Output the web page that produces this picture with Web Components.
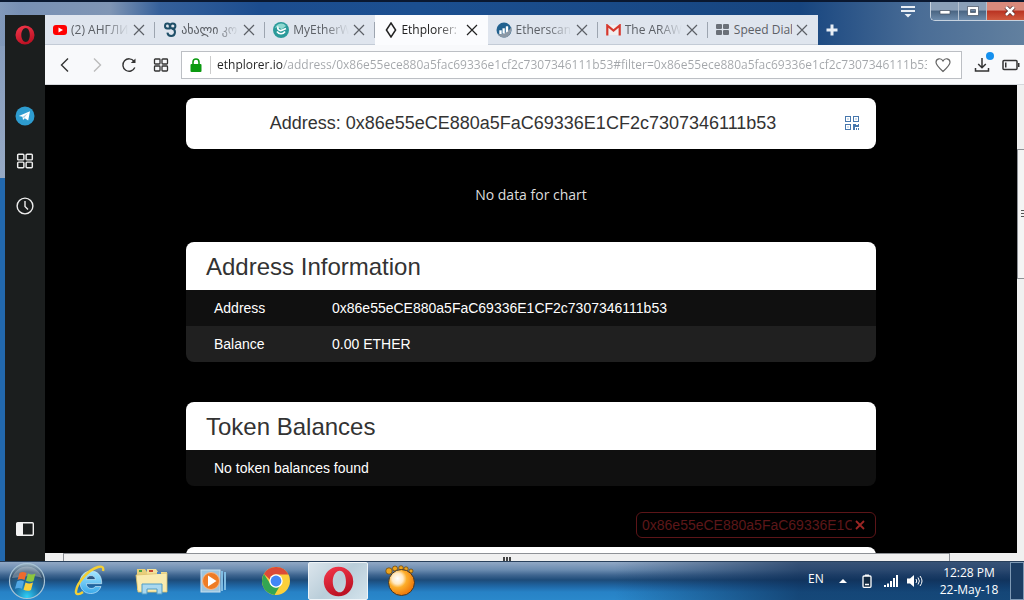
<!DOCTYPE html>
<html lang="en">
<head>
<meta charset="utf-8">
<title>Ethplorer: address</title>
<style>
  html, body { margin: 0; height: 100%; background: #000; }
  body { font-family: "Open Sans", "Noto Sans", sans-serif; overflow: hidden; }
</style>
</head>
<body>
<desktop-screen>
  <browser-window slot="window">
    <side-bar slot="side"></side-bar>
    <browser-tab slot="tabs" icon="youtube" label="(2) АНГЛИ"></browser-tab>
    <browser-tab slot="tabs" icon="loops" label="ახალი კო"></browser-tab>
    <browser-tab slot="tabs" icon="mew" label="MyEtherW"></browser-tab>
    <browser-tab slot="tabs" icon="diamond" label="Ethplorer:" active></browser-tab>
    <browser-tab slot="tabs" icon="etherscan" label="Etherscan"></browser-tab>
    <browser-tab slot="tabs" icon="gmail" label="The ARAW"></browser-tab>
    <browser-tab slot="tabs" icon="dial" label="Speed Dial"></browser-tab>
    <address-bar slot="bar"></address-bar>
    <scroll-view slot="page">
      <address-heading>Address: 0x86e55eCE880a5FaC69336E1CF2c7307346111b53</address-heading>
      <chart-note>No data for chart</chart-note>
      <info-card heading="Address Information" rows='[["Address","0x86e55eCE880a5FaC69336E1CF2c7307346111b53"],["Balance","0.00 ETHER"]]'></info-card>
      <info-card heading="Token Balances" rows='[["No token balances found"]]'></info-card>
      <filter-box value="0x86e55eCE880a5FaC69336E1CF2c7307346111b53"></filter-box>
      <info-card heading="" rows="[]"></info-card>
    </scroll-view>
  </browser-window>
  <task-bar slot="taskbar"></task-bar>
</desktop-screen>

<script>
const ICONS = {
  youtube: ['0 0 14 12', '<rect y="1" width="14" height="10" rx="3" fill="#f00"/><path d="M5.5 3.5v5L10 6z" fill="#fff"/>'],
  loops: ['0 0 14 16', '<g fill="none" stroke="#1f4f68" stroke-width="2"><path d="M6.800 7V3.800a2.400 2.400 0 1 0-2.600 2.600h3.300"/><circle cx="9.800" cy="4" r="2.600"/><path d="M9 6.500a3.800 3.800 0 1 1-4.600 4.200"/></g>'],
  mew: ['0 0 16 16', '<circle cx="8" cy="8" r="8" fill="#2b9a9a"/><path d="M2 6a6.3 6.3 0 0 1 11-2L8.700 7.300 5 5z" fill="#8ed8d0"/><path d="M5 4.500c-1 3 1.500 5 4.500 3.500l3.500-1.500M4 9.500c2 3 6 3 8 0" fill="none" stroke="#fff" stroke-width="1.700"/>'],
  diamond: ['0 0 12 16', '<path d="M6 1l4.600 7L6 15 1.400 8z" fill="none" stroke="#222" stroke-width="1.500"/>'],
  etherscan: ['0 0 16 16', '<circle cx="8" cy="8" r="7.500" fill="#21618f"/><path d="M1.500 12C8 13 13 9 15.500 5c.8 6-3 10.500-7.500 10.500-3 0-5-1.500-6.500-3.500z" fill="#8b98a5"/><path d="M3.500 12V8.500h2V12M6.700 11.500v-5h2v5M10 10.500V4.500h2v5" fill="#fff" stroke="#fff" stroke-width=".4"/>'],
  gmail: ['0 0 15 12', '<path d="M1 1h13v10H1z" fill="#f2eeee"/><path d="M1.300 11.500V1.500l6.200 5 6.200-5v10" fill="none" stroke="#d6382d" stroke-width="2.200"/>'],
  dial: ['0 0 14 12', '<g fill="#6b7078"><rect width="6" height="5" rx="1"/><rect x="7" width="6" height="5" rx="1"/><rect y="6" width="6" height="5" rx="1"/><rect x="7" y="6" width="6" height="5" rx="1"/></g>'],
  close: ['0 0 12 12', '<path d="M1 1l10 10M11 1L1 11" fill="none" stroke="currentColor" stroke-width="1.200"/>'],
  clear: ['0 0 10 10', '<path d="M1 1l8 8M9 1L1 9" fill="none" stroke="currentColor" stroke-width="1.800"/>'],
  back: ['0 0 16 16', '<path d="M11 1.500L4.500 8l6.500 6.500" fill="none" stroke="currentColor" stroke-width="1.400"/>'],
  forward: ['0 0 16 16', '<path d="M5 1.500L11.500 8 5 14.500" fill="none" stroke="currentColor" stroke-width="1.400"/>'],
  reload: ['0 0 16 16', '<path d="M13.800 10.500A6.200 6.200 0 1 1 13 4.200" fill="none" stroke="currentColor" stroke-width="1.400"/><path d="M14.500 1.500v4.600H9.800z" fill="currentColor"/>'],
  grid: ['0 0 16 16', '<g fill="none" stroke="currentColor" stroke-width="1.300"><rect x="1.500" y="2" width="5.500" height="5" rx=".8"/><rect x="9" y="2" width="5.500" height="5" rx=".8"/><rect x="1.500" y="9" width="5.500" height="5" rx=".8"/><rect x="9" y="9" width="5.500" height="5" rx=".8"/></g>'],
  lock: ['0 0 12 14', '<path d="M3 7V4a3 3 0 0 1 6 0v3" fill="none" stroke="#0b9a10" stroke-width="1.600"/><rect x=".5" y="6" width="11" height="8" rx="1" fill="#0b9a10"/>'],
  heart: ['0 0 16 16', '<path d="M8 14.500C3 10 1 8 1 5.300 1 1.300 6.300.500 8 4c1.700-3.500 7-2.700 7 1.300C15 8 13 10 8 14.500z" fill="none" stroke="#666" stroke-width="1.200"/>'],
  download: ['0 0 16 16', '<path d="M8 1v9.500M4.200 7L8 10.800 11.800 7M1.500 11v3h13v-3" fill="none" stroke="#333" stroke-width="1.500"/>'],
  cell: ['0 0 18 12', '<rect x="1" y="1.500" width="14" height="9" rx="1" fill="none" stroke="#333" stroke-width="1.500"/><path d="M16 4h1.500v4H16z" fill="#333"/><path d="M3 3.500h1.500v5H3z" fill="#333"/>'],
  plus: ['0 0 12 12', '<path d="M6 .5v11M.5 6h11" stroke="#e8eef5" stroke-width="3"/>'],
  menu: ['0 0 14 12', '<path d="M0 1h14M0 5h14" stroke="#e8eef5" stroke-width="2"/><path d="M3.500 8h7L7 11.500z" fill="#e8eef5"/>'],
  opera: ['0 0 20 20', '<defs><linearGradient id="p" x2=".4" y2="1"><stop offset="0" stop-color="#f5384c"/><stop offset="1" stop-color="#bd1224"/></linearGradient></defs><path fill-rule="evenodd" d="M10 .5a9.500 9.500 0 1 0 0 19 9.500 9.500 0 0 0 0-19zM10.800 3c2.300 0 4 2.800 4 7s-1.700 7-4 7-4.500-2.800-4.500-7 2.200-7 4.500-7z" fill="url(#p)"/>'],
  telegram: ['0 0 20 20', '<circle cx="10" cy="10" r="9.500" fill="#2e9ccf"/><path d="M3.800 10L15 5.200 13.200 14.500 9.800 12.300 8 14l-.5-3.200z" fill="#fff"/><path d="M7.700 11L13 7l-4 5z" fill="#a9cfe2"/>'],
  clock: ['0 0 18 18', '<circle cx="9" cy="9" r="7.900" fill="none" stroke="#eee" stroke-width="1.400"/><path d="M9 4v5.500l3 3" fill="none" stroke="#eee" stroke-width="1.400"/>'],
  panel: ['0 0 18 14', '<rect x=".7" y=".7" width="16.600" height="12.600" rx="1" fill="none" stroke="#f2f2f2" stroke-width="1.400"/><path d="M1 1h6v12H1z" fill="#f2f2f2"/>'],
  qr: ['0 0 14 14', '<g fill="none" stroke="#4677ad"><rect x=".5" y=".5" width="5" height="5"/><rect x="8.500" y=".5" width="5" height="5"/><rect x=".5" y="8.500" width="5" height="5"/></g><path d="M2.500 2.500h1v1h-1zM10.500 2.500h1v1h-1zM2.500 10.500h1v1h-1zM8 8h3v1h2V8h1v3h-4v3H8zM11 12h1v2h-1zM13 12h1v2h-1z" fill="#4677ad"/>'],
  start: ['0 0 38 38', '<defs><radialGradient id="o" cx=".5" cy=".95" r=".95"><stop offset="0" stop-color="#2fd0f5"/><stop offset=".4" stop-color="#1c70a8"/><stop offset=".75" stop-color="#2c4a68"/><stop offset="1" stop-color="#a5bccb"/></radialGradient></defs><circle cx="19" cy="19" r="17.500" fill="url(#o)" stroke="#a8c4d6" stroke-width="1.200"/><path d="M4 16a15.500 15.500 0 0 1 30 0c-9-4-20-1-30 0z" fill="#fff" opacity=".28"/><path d="M11.500 11c2.500-1.500 4.500-1.200 7 0l-2 7c-2.500-1.300-4.500-1.300-7 0z" fill="#ee6b2d"/><path d="M20 11.500c2.500 1.300 5 1.300 7.500 0l-2 7.500c-2.500 1.300-5 1-7.500-.3z" fill="#8cc63e"/><path d="M9 19.500c2.500-1.500 5-1.200 7 0l-2 7.300c-2.300-1.200-4.500-1.200-7 0z" fill="#52a8e5"/><path d="M17.500 20.500c2.500 1.300 5 1.200 7.500 0L23 28c-2.500 1.300-5 1-7.500-.3z" fill="#fbd03b"/>'],
  ie: ['0 0 32 32', '<defs><linearGradient id="e" x2="0" y2="1"><stop offset="0" stop-color="#a5e6ff"/><stop offset="1" stop-color="#3aa9ea"/></linearGradient></defs><path d="M27 21.500c-1.700 4.500-5.500 7-10.300 7C10.500 28.500 6 24 6 17.500S10.500 6 17 6s11 4.500 10.700 12.700H12.300c.2 3 2.100 4.800 4.900 4.800 2 0 3.300-.7 4-2zM12.400 14.500h9c-.3-2.500-2-4-4.400-4s-4.200 1.500-4.600 4z" fill="url(#e)" stroke="#d8f3ff" stroke-width=".6"/><path d="M9 27c-4 3-7.500 3-7-1C3 18 14 5 24 2c4-1 6 0 5 4" fill="none" stroke="#f3cf35" stroke-width="2.400"/>'],
  folder: ['0 0 34 30', '<path d="M2 3h8l2 3h18v18H2z" fill="#e8cf7c"/><path d="M4 4h3v2H4z" fill="#49a441"/><path d="M12 3h9l2 3h9v18H12z" fill="#f3e19b"/><path d="M1 9l31-2v19H3z" fill="#f9ebb0" stroke="#dcc069" stroke-width=".8"/><path d="M14 4h4v2h-4z" fill="#c9472f"/><path d="M22 6h4v2h-4z" fill="#4c86c8"/><path d="M7 28V18h20v10h-5v-5H12v5z" fill="#a9d8ef" stroke="#4f9cc6"/>'],
  player: ['0 0 28 24', '<path d="M21 2h2v20h-2zM24 3h2v18h-2z" fill="#7fbce2"/><rect x="1" y="1" width="19" height="22" fill="#9cc4de" stroke="#c9e2f1"/><circle cx="11" cy="12" r="8.500" fill="#ee7c25" stroke="#f7b98a"/><path d="M8 6.500v11l8.500-5.500z" fill="#fff"/>'],
  chrome: ['0 0 30 30', '<circle cx="15" cy="15" r="14" fill="#fbd03b"/><path d="M2.900 8A14 14 0 0 1 27.500 8.600H15a6.400 6.400 0 0 0-6.200 5z" fill="#dc4a38"/><path d="M2.900 8A14 14 0 0 0 13.500 29l5-8.500A6.400 6.400 0 0 1 9.400 18z" fill="#33a552"/><circle cx="15" cy="15" r="6.700" fill="#fff"/><circle cx="15" cy="15" r="5.400" fill="#4286f5"/>'],
  gom: ['0 0 32 32', '<defs><radialGradient id="g" cx=".35" cy=".35" r=".7"><stop offset="0" stop-color="#fff"/><stop offset=".3" stop-color="#ffe9c4"/><stop offset=".5" stop-color="#fcae2b"/><stop offset="1" stop-color="#ee7206"/></radialGradient></defs><g fill="#eea41d" stroke="#5f3f10" stroke-width=".7"><circle cx="5" cy="6" r="3.200"/><circle cx="11" cy="3.500" r="2.500"/><circle cx="17" cy="3" r="2.300"/><circle cx="22" cy="4" r="2.200"/><circle cx="27" cy="6" r="2"/></g><circle cx="17.500" cy="17.500" r="13" fill="url(#g)" stroke="#40372a"/>'],
  up: ['0 0 8 4', '<path d="M0 4l4-4 4 4z" fill="#fff"/>'],
  battery: ['0 0 10 14', '<path d="M3 .5h4v2H3z" fill="#fff"/><rect x="1" y="2" width="8" height="11.300" rx="1" fill="#142b42" stroke="#fff" stroke-width="1.300"/><path d="M3 10.500h4" stroke="#fff" stroke-width="1.500"/>'],
  signal: ['0 0 14 12', '<path d="M0 10h2v2H0zM3 8.500h2V12H3zM6 6h2v6H6zM9 3h2v9H9zM12 0h2v12h-2z" fill="#fff"/>'],
  sound: ['0 0 16 14', '<path d="M0 4.500h3L7 1v12L3 9.500H0z" fill="#fff"/><path d="M9 5q1.500 2 0 4M11 3.500q2.800 3.500 0 7M13 2q4 5 0 10" fill="none" stroke="#fff"/>'],
  min: ['0 0 12 10', '<path d="M1 4.500h10v3.500H1z" fill="#fff" stroke="#444f60" stroke-width=".7"/>'],
  max: ['0 0 12 10', '<path fill-rule="evenodd" d="M.5.5h11v9H.5zM3.500 3.500v3h5v-3z" fill="#fff" stroke="#444f60" stroke-width=".7"/>'],
  quit: ['0 0 12 10', '<path d="M2 1l8 8M10 1L2 9" stroke="#4d2020" stroke-width="4"/><path d="M2 1l8 8M10 1L2 9" stroke="#fff" stroke-width="2.600"/>']
};

function define(name, css, html, setup) {
  const template = document.createElement('template');
  template.innerHTML = `<style>*{box-sizing:border-box}button{border:0;padding:0;margin:0;background:none;font:inherit;color:inherit;display:grid;place-items:center}${css}</style>${html}`;
  customElements.define(name, class extends HTMLElement {
    connectedCallback() {
      if (this.shadowRoot) return;
      const root = this.attachShadow({ mode: 'open' });
      root.append(template.content.cloneNode(true));
      if (setup) setup(this, root);
    }
  });
}

define('ui-icon', ':host{display:block;flex:none}svg{display:block}', '', (host, root) => {
  const [box, art] = ICONS[host.getAttribute('name')];
  const w = box.split(' ')[2], h = box.split(' ')[3];
  const width = host.getAttribute('width') || w;
  root.innerHTML += `<svg aria-hidden="true" viewBox="${box}" width="${width}" height="${Math.round(width * h / w)}">${art}</svg>`;
});

define('desktop-screen', `
  :host{display:grid;grid-template-rows:minmax(0,1fr) 39px;height:100vh}
`, '<slot name="window"></slot><slot name="taskbar"></slot>');

define('browser-window', `
  :host{display:grid;grid-template-columns:40px minmax(0,1fr);padding-left:5px;min-height:0;border-top:2px solid #0a1830;
    background:linear-gradient(#0000 0 176px,#2268ad 176px) 0 0/5px 100% no-repeat,
      linear-gradient(90deg,#8299ba 0,#7890b4 20px,#7f95b4 110px,#35609a 160px,#1c4d8f 260px,#1b4f90 420px,#17457f 800px,#4a6d96 920px,#62809f 1024px) 0 0/100% 44px no-repeat,
      linear-gradient(#8299ba,#c5cfdd);}
  .side{margin-top:13px;display:grid;min-height:0}
  .main{display:grid;grid-template-rows:43px 40px minmax(0,1fr);min-width:0;min-height:0}
  header{display:flex;align-items:flex-end;min-width:0}
  .tabs{display:flex;flex:0 1 773px;min-width:0;height:30px}
  .add{width:28px;height:30px;flex:none}
  .space{flex:1}
  .menu{align-self:flex-start;width:28px;height:20px;margin-right:8px}
  .controls{align-self:flex-start;display:flex;width:94px;height:19px;border:1px solid #c6d2df;border-top:0;border-right:0;border-radius:0 0 0 5px;overflow:hidden}
  .controls button{width:28px;border-right:1px solid #b4c1d0;background:linear-gradient(#8ba0b8 0 45%,#4a6583 50%,#6d8bab)}
  .controls .quit{flex:1;border:0;padding-left:8px;background:linear-gradient(#d98a7c 0 45%,#ba3322 50%,#d05a3f)}
`, `
  <div class="side"><slot name="side"></slot></div>
  <div class="main">
    <header>
      <nav class="tabs" aria-label="Tabs"><slot name="tabs"></slot></nav>
      <button class="add" aria-label="New tab"><ui-icon name="plus"></ui-icon></button>
      <span class="space"></span>
      <button class="menu" aria-label="Tab menu"><ui-icon name="menu"></ui-icon></button>
      <div class="controls">
        <button aria-label="Minimize"><ui-icon name="min"></ui-icon></button>
        <button aria-label="Maximize"><ui-icon name="max"></ui-icon></button>
        <button class="quit" aria-label="Close window"><ui-icon name="quit"></ui-icon></button>
      </div>
    </header>
    <slot name="bar"></slot>
    <slot name="page"></slot>
  </div>`);

define('browser-tab', `
  :host{display:flex;align-items:center;flex:1 1 0;min-width:0;height:30px;padding:0 10px 0 8px;gap:4px;background:#dfe5ee;color:#5c6066;
    font:12px/16px "Open Sans","DejaVu Sans",sans-serif;border-bottom:1px solid #c3cbd6;box-sizing:border-box;
    background-image:linear-gradient(#9da5b0,#9da5b0);background-size:1px 16px;background-position:100% 7px;background-repeat:no-repeat}
  :host([active]){background:#fbfcfe;border-color:#fbfcfe;color:#222;padding-left:10px}
  a{display:flex;align-items:center;gap:4px;flex:1;min-width:0;color:inherit;text-decoration:none}
  span{flex:1;min-width:0;white-space:nowrap;overflow:hidden;mask-image:linear-gradient(90deg,#000 calc(100% - 24px),#0000)}
  :host([icon=dial]) span{mask-image:none}
  :host([icon=dial]){background-image:none}
  button{width:12px;height:16px}
`, '<a href="#"></a><button><ui-icon name="close"></ui-icon></button>', (host, root) => {
  const label = host.getAttribute('label');
  root.querySelector('a').innerHTML = `<ui-icon name="${host.getAttribute('icon')}"></ui-icon><span>${label}</span>`;
  root.querySelector('button').setAttribute('aria-label', 'Close ' + label);
});

define('side-bar', `
  :host{display:flex;flex-direction:column;align-items:center;background:#1b1e1e;min-height:0}
  button{width:40px;height:45px}
  .logo{height:40px;margin-bottom:38px}
  .panel{margin-top:auto;margin-bottom:10px}
`, `
  <button class="logo" aria-label="Opera"><ui-icon name="opera"></ui-icon></button>
  <button aria-label="Telegram"><ui-icon name="telegram"></ui-icon></button>
  <button aria-label="Speed dial"><ui-icon name="grid" width="18" style="color:#eee"></ui-icon></button>
  <button aria-label="History"><ui-icon name="clock"></ui-icon></button>
  <button class="panel" aria-label="Toggle sidebar"><ui-icon name="panel"></ui-icon></button>`);

define('address-bar', `
  :host{display:flex;align-items:center;background:#f8f9fb;color:#333;padding-left:4px;border-bottom:1px solid #d5d8dc;overflow:hidden}
  button{width:32px;height:32px;flex:none}
  .off{color:#bbb}
  .field{display:flex;align-items:center;flex:1;min-width:0;height:28px;margin-left:4px;border:1px solid #bcbfc4;background:#fff;padding:0 2px 0 8px}
  i{width:1px;height:18px;background:#ccc;margin:0 6px 0 8px}
  input{flex:1;min-width:0;height:24px;border:0;padding:0;outline:0;font:12px/24px "Open Sans",sans-serif;
    color:transparent;background:linear-gradient(90deg,#222 66px,#a3a6aa 66px);-webkit-background-clip:text;background-clip:text}
  .dl{position:relative;margin-left:4px}
  .dl::after{content:"";position:absolute;right:4px;top:3px;width:8px;height:8px;border-radius:50%;background:#1590ee}
  .last{width:26px}
`, `
  <button aria-label="Back"><ui-icon name="back"></ui-icon></button>
  <button class="off" aria-label="Forward" disabled><ui-icon name="forward"></ui-icon></button>
  <button aria-label="Reload"><ui-icon name="reload"></ui-icon></button>
  <button aria-label="Speed dial"><ui-icon name="grid"></ui-icon></button>
  <div class="field"><ui-icon name="lock"></ui-icon><i></i>
    <input aria-label="Address" value="ethplorer.io/address/0x86e55ece880a5fac69336e1cf2c7307346111b53#filter=0x86e55ece880a5fac69336e1cf2c7307346111b53">
    <button aria-label="Add bookmark"><ui-icon name="heart"></ui-icon></button></div>
  <button class="dl" aria-label="Downloads"><ui-icon name="download"></ui-icon></button>
  <button class="last" aria-label="Battery saver"><ui-icon name="cell"></ui-icon></button>`);

define('scroll-view', `
  :host{display:grid;grid-template-columns:minmax(0,1fr) 7px;grid-template-rows:minmax(0,1fr) 8px;background:#f0f0f0;min-height:0}
  main{background:#000;overflow:hidden;padding:13px 20px 0}
  .col{max-width:690px;margin:0 auto}
  .v{padding-top:64px}
  .v b{display:grid;align-items:center;justify-items:end;height:130px;border:1px solid #8e9196;border-right:0;background:#f4f4f4}
  .v b::after{content:"";width:3px;height:8px;background:repeating-linear-gradient(#555 0 1px,#0000 1px 3px)}
  .h{padding:0 67px 0 18px}
  .h b{display:grid;place-items:end center;height:8px;border:1px solid #8e9196;border-bottom:0;background:#f0f0f0}
  .h b::after{content:"";width:8px;height:4px;background:repeating-linear-gradient(90deg,#444 0 2px,#0000 2px 3px)}
`, `<main><div class="col"><slot></slot></div></main><div class="v"><b></b></div><div class="h"><b></b></div>`);

define('address-heading', `
  :host{display:flex;align-items:center;height:51px;border-radius:8px;background:#fff;color:#333;padding:0 16px 2px;box-sizing:border-box}
  h1{flex:1;margin:0;text-align:center;font:18px/24px "Liberation Sans",Arial,sans-serif;min-width:0;overflow-wrap:anywhere}
  button{width:16px;height:16px}
`, '<h1><slot></slot></h1><button aria-label="Show QR code"><ui-icon name="qr" width="14"></ui-icon></button>');

define('chart-note', `
  :host{display:grid;place-items:center;height:93px;padding-bottom:2px;box-sizing:border-box;color:#ddd;font:14px/20px "Open Sans",sans-serif}
`, '<slot></slot>');

define('info-card', `
  :host{display:block;border-radius:8px;overflow:hidden;margin-bottom:40px}
  h2{margin:0;height:48px;padding:1px 20px;background:#fff;font:24px/48px "Liberation Sans",Arial,sans-serif;color:#333}
  table{width:100%;border-collapse:collapse;font:14px/20px "Liberation Sans",Arial,sans-serif;color:#fff}
  tr{background:#101010}
  tr:nth-child(2){background:#202020}
  th,td{text-align:left;font-weight:400;padding:8px 28px}
  th{width:146px;padding-right:0}
  th + td{padding-left:0}
`, '<h2></h2><table><tbody></tbody></table>', (host, root) => {
  root.querySelector('h2').textContent = host.getAttribute('heading');
  root.querySelector('tbody').innerHTML = JSON.parse(host.getAttribute('rows')).map(r =>
    r.length > 1 ? `<tr><th scope="row">${r[0]}</th><td>${r[1]}</td></tr>` : `<tr><td>${r[0]}</td></tr>`).join('');
});

define('filter-box', `
  :host{display:flex;align-items:center;width:240px;height:26px;margin:-14px 0 9px auto;border:1px solid #5c1518;border-radius:6px;padding:0 9px 0 5px;gap:2px;box-sizing:border-box}
  input{flex:1;min-width:0;height:22px;border:0;padding:0;outline:0;background:none;color:#5c1719;font:14px/22px "Liberation Sans",Arial,sans-serif}
  button{color:#9c2624;width:12px;height:20px}
`, '<input aria-label="Filter"><button aria-label="Clear filter"><ui-icon name="clear"></ui-icon></button>', (host, root) => {
  root.querySelector('input').value = host.getAttribute('value');
});

define('task-bar', `
  :host{display:flex;align-items:stretch;border-top:1px solid #29405c;color:#fff;font:12px/17px "Open Sans",sans-serif;overflow:hidden;
    background:linear-gradient(90deg,#0000 60%,#0b2850aa 78%,#0b2850aa),
      linear-gradient(#91a8c5 0,#6a8bb0 8px,#3f6690 13px,#1d4b79 18px,#1f66a4 24px,#2782c6 30px,#2a88cb)}
  button{width:62px;flex:none}
  .start{width:54px}
  .ie{margin-left:5px}
  .on{width:60px;border:1px solid #eef4f8;border-radius:2px;background:linear-gradient(135deg,#dbe5ec,#b9cdd9 50%,#d3e3ec);margin:0 1px}
  .tray{margin-left:auto;display:flex;align-items:center;color:#fff}
  .tray button{width:24px;height:32px}
  .lang{width:23px;padding-bottom:6px}
  .clock{width:80px;text-align:center;margin:0 1px 0 2px}
  .tray .show{width:14px;height:38px;border:1px solid #7f9ab5;background:#1c3d63}
`, `
  <button class="start" aria-label="Start"><ui-icon name="start"></ui-icon></button>
  <button class="ie" aria-label="Internet Explorer"><ui-icon name="ie"></ui-icon></button>
  <button aria-label="Explorer"><ui-icon name="folder"></ui-icon></button>
  <button aria-label="Media Player"><ui-icon name="player"></ui-icon></button>
  <button aria-label="Chrome"><ui-icon name="chrome"></ui-icon></button>
  <button class="on" aria-label="Opera"><ui-icon name="opera" width="31"></ui-icon></button>
  <button aria-label="GOM Player"><ui-icon name="gom"></ui-icon></button>
  <div class="tray">
    <span class="lang">EN</span>
    <button aria-label="Hidden icons"><ui-icon name="up"></ui-icon></button>
    <button aria-label="Battery"><ui-icon name="battery"></ui-icon></button>
    <button aria-label="Network"><ui-icon name="signal"></ui-icon></button>
    <button aria-label="Volume"><ui-icon name="sound"></ui-icon></button>
    <div class="clock"><div>12:28 PM</div><div>22-May-18</div></div>
    <button class="show" aria-label="Show desktop"></button>
  </div>`);
</script>
</body>
</html>
